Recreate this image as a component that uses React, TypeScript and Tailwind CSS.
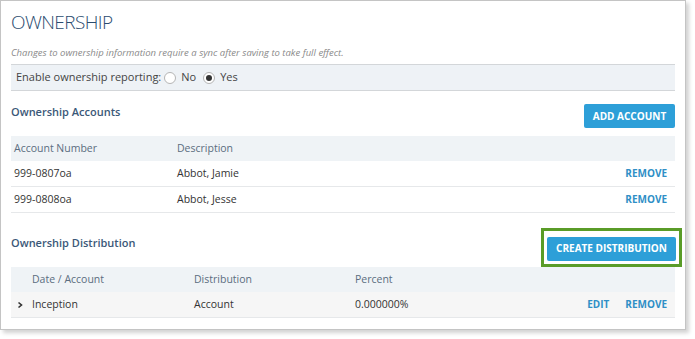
import React from "react";

const font = { fontFamily: '"Open Sans", "Noto Sans", sans-serif' };

const Radio: React.FC<{ checked?: boolean }> = ({ checked }) => (
  <span className="inline-flex h-[12px] w-[12px] items-center justify-center rounded-full border border-[#b5b5b5] bg-white">
    {checked && <span className="h-[6px] w-[6px] rounded-full bg-[#333]" />}
  </span>
);

const accounts = [
  { number: "999-0807oa", description: "Abbot, Jamie" },
  { number: "999-0808oa", description: "Abbot, Jesse" },
];

export default function App() {
  return (
    <div className="h-[339px] w-[695px] bg-white" style={font}>
      <div className="h-[330px] w-[686px] border border-[#c4c4c4] bg-white px-[10px] shadow-[3px_3px_4px_rgba(0,0,0,0.18)]">
        <h1 className="mt-[8px] h-[26px] text-[19px] leading-[26px] font-light tracking-[-0.6px] text-[#2b4c6f]">
          OWNERSHIP
        </h1>
        <p className="mt-[10px] h-[16px] text-[9.5px] leading-[16px] italic text-[#8a8a8a]">
          Changes to ownership information require a sync after saving to take full effect.
        </p>
        <div className="mt-[3px] flex h-[27px] items-center gap-[3px] border-y border-[#d3d6d9] bg-[#eef2f6] pl-[5px] text-[11px] text-[#444]">
          <span>Enable ownership reporting:</span>
          <Radio />
          <span className="ml-[2px] mr-[4px]">No</span>
          <Radio checked />
          <span className="ml-[2px]">Yes</span>
        </div>

        {/* accounts */}
        <div className="mt-[13px] flex h-[24px] items-center justify-between">
          <h2 className="-mt-[7px] text-[11px] font-semibold text-[#3b5878]">Ownership Accounts</h2>
          <button className="h-[24px] w-[91px] rounded-[2px] bg-[#2d9fd8] text-[10px] font-bold text-white">
            ADD ACCOUNT
          </button>
        </div>
        <div className="mt-[8px] text-[10.5px]">
          <div className="flex h-[25px] items-center bg-[#eff3f6] text-[#5b6d80]">
            <span className="w-[166px] pl-[3px]">Account Number</span>
            <span>Description</span>
          </div>
          {accounts.map((a) => (
            <div key={a.number} className="flex h-[26px] items-center border-b border-[#e6e8ea] text-[#333]">
              <span className="w-[166px] pl-[3px]">{a.number}</span>
              <span className="flex-1">{a.description}</span>
              <span className="pr-[8px] text-[10px] font-bold text-[#2f8fc6]">REMOVE</span>
            </div>
          ))}
        </div>

        {/* distribution */}
        <div className="mt-[16px] flex h-[37px] items-center justify-between">
          <h2 className="-mt-[8px] text-[11px] font-semibold text-[#3b5878]">Ownership Distribution</h2>
          <div className="-mr-[7px] border-[3px] border-[#5a9c28] p-[3px]">
            <button className="h-[24px] w-[129px] rounded-[2px] bg-[#2d9fd8] text-[10px] font-bold text-white">
              CREATE DISTRIBUTION
            </button>
          </div>
        </div>
        <div className="mt-px text-[10.5px]">
          <div className="flex h-[25px] items-center bg-[#eff3f6] text-[#5b6d80]">
            <span className="w-[183px] pl-[21px]">Date / Account</span>
            <span className="w-[161px]">Distribution</span>
            <span>Percent</span>
          </div>
          <div className="flex h-[26px] items-center border-b border-[#e6e8ea] bg-[#f6f6f6] text-[#333]">
            <span className="flex w-[183px] items-center pl-[5px]">
              <svg width="8" height="8" viewBox="0 0 8 8" className="mr-[8px]">
                <path d="M2.5 1.5 L5.5 4 L2.5 6.5" fill="none" stroke="#333" strokeWidth="1.6" />
              </svg>
              Inception
            </span>
            <span className="w-[161px]">Account</span>
            <span className="flex-1">0.000000%</span>
            <span className="mr-[16px] text-[10px] font-bold text-[#2f8fc6]">EDIT</span>
            <span className="pr-[8px] text-[10px] font-bold text-[#2f8fc6]">REMOVE</span>
          </div>
        </div>
      </div>
    </div>
  );
}
